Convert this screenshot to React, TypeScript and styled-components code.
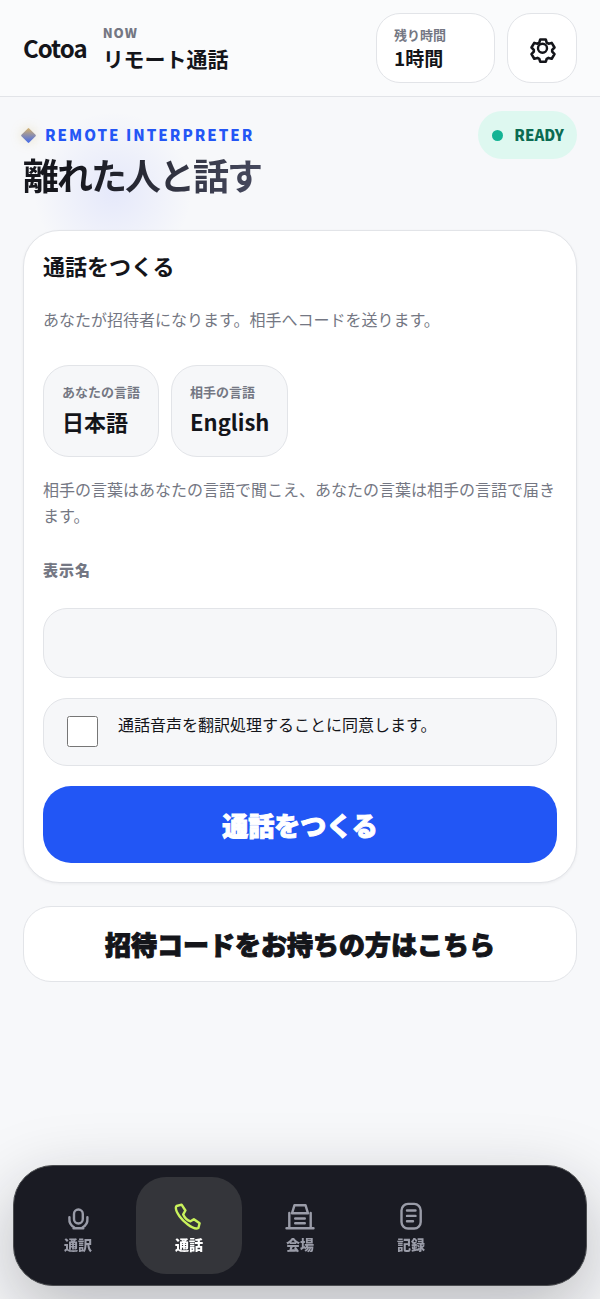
import React from "react";
import styled, { createGlobalStyle, css } from "styled-components";

const GlobalStyle = createGlobalStyle`
  *, *::before, *::after { box-sizing: border-box; }
  body {
    margin: 0;
    min-height: 100vh;
    background: #f7f8fa;
    color: #14151a;
    font-family: "Noto Sans CJK JP", "Noto Sans", sans-serif;
    font-size: 16px;
    line-height: 26px;
  }
  button, input { font: inherit; color: inherit; }
  h1, h2, p { margin: 0; }
`;

const buttonText = css`
  font-size: 26px;
  font-weight: 900;
  -webkit-text-stroke: 1px currentColor;
`;

const Page = styled.div`
  min-height: 100vh;
  padding-bottom: 160px;
`;

const Header = styled.header`
  display: flex;
  align-items: center;
  gap: 12px;
  padding: 13px 23px;
  background: #fafbfc;
  border-bottom: 1px solid #e2e4e8;
`;

const Brand = styled.a`
  margin-right: 4px;
  color: inherit;
  font-size: 24px;
  font-weight: 700;
  line-height: 32px;
  letter-spacing: -1px;
  text-decoration: none;
`;

const Context = styled.div`
  display: flex;
  flex: 1;
  flex-direction: column;
  min-width: 0;
`;

const ContextLabel = styled.span`
  color: #747783;
  font-size: 13px;
  font-weight: 900;
  line-height: 20px;
  letter-spacing: 1px;
`;

const ContextTitle = styled.strong`
  font-size: 21px;
  font-weight: 700;
  line-height: 30px;
`;

const TimeCard = styled.div`
  display: flex;
  flex-direction: column;
  justify-content: center;
  width: 119px;
  height: 70px;
  padding: 0 17px;
  background: #fff;
  border: 1px solid #e2e4e8;
  border-radius: 24px;
`;

const SmallLabel = styled.span`
  color: #747783;
  font-size: 13px;
  font-weight: 700;
  line-height: 20px;
`;

const TimeValue = styled.strong`
  font-size: 19px;
  font-weight: 700;
  line-height: 26px;
`;

const SettingsButton = styled.button`
  display: grid;
  place-items: center;
  width: 70px;
  height: 70px;
  padding: 0;
  background: #fff;
  border: 1px solid #e2e4e8;
  border-radius: 24px;
`;

const Main = styled.main`
  padding: 14px 23px 0;
`;

const Hero = styled.section`
  position: relative;
  margin-bottom: 33px;

  &::before {
    content: "";
    position: absolute;
    left: 10px;
    top: 0;
    width: 160px;
    height: 160px;
    background: radial-gradient(circle, rgba(82, 104, 255, 0.11), rgba(82, 104, 255, 0) 70%);
    pointer-events: none;
  }
`;

const HeroTop = styled.div`
  position: relative;
  display: flex;
  align-items: center;
  justify-content: space-between;
`;

const Eyebrow = styled.p`
  display: flex;
  align-items: center;
  gap: 11px;
  color: #2456f5;
  font-size: 15px;
  font-weight: 900;
  letter-spacing: 2px;

  &::before {
    content: "";
    width: 11px;
    height: 11px;
    background: linear-gradient(135deg, #d8b36a, #3f68ee);
    border-radius: 1px;
    box-shadow: 0 0 12px rgba(216, 190, 110, 0.4);
    transform: rotate(45deg);
  }
`;

const Status = styled.span`
  display: flex;
  align-items: center;
  gap: 11px;
  height: 48px;
  padding: 0 13px 0 14px;
  background: #def8f0;
  border-radius: 24px;
  color: #0b6b52;
  font-size: 15px;
  font-weight: 900;

  &::before {
    content: "";
    width: 11px;
    height: 11px;
    background: #14b394;
    border-radius: 50%;
  }
`;

const Title = styled.h1`
  position: relative;
  width: fit-content;
  margin-top: -7px;
  background: linear-gradient(100deg, #16171d 20%, #484b60);
  background-clip: text;
  color: transparent;
  font-size: 36px;
  font-weight: 700;
  line-height: 45px;
  letter-spacing: -2px;
`;

const Card = styled.section`
  position: relative;
  display: flex;
  flex-direction: column;
  padding: 19px;
  background: #fff;
  border: 1px solid #e2e4e8;
  border-radius: 36px;
  box-shadow: 0 1px 3px rgba(20, 22, 30, 0.06);
`;

const CardTitle = styled.h2`
  font-size: 22px;
  font-weight: 700;
  line-height: 30px;
`;

const Note = styled.p`
  color: #747783;
`;

const Intro = styled(Note)`
  margin: 26px 0 33px;
`;

const Languages = styled.div`
  display: flex;
  gap: 12px;
  margin-bottom: 19px;
`;

const Language = styled.button`
  display: flex;
  flex-direction: column;
  align-items: flex-start;
  justify-content: center;
  height: 92px;
  padding: 0 18px;
  background: #f6f7f9;
  border: 1px solid #e2e4e8;
  border-radius: 26px;
`;

const LanguageName = styled.strong`
  font-size: 22px;
  font-weight: 700;
  line-height: 38px;
`;

const FieldLabel = styled.label`
  margin: 29px 0 25px;
  color: #747783;
  font-size: 15px;
  font-weight: 900;
  letter-spacing: 1px;
`;

const TextField = styled.input`
  width: 100%;
  height: 70px;
  padding: 0 20px;
  background: #f6f7f9;
  border: 1px solid #e2e4e8;
  border-radius: 24px;
`;

const Consent = styled.label`
  display: flex;
  align-items: flex-start;
  gap: 20px;
  height: 68px;
  margin: 20px 0;
  padding: 12px 23px;
  background: #f6f7f9;
  border: 1px solid #e2e4e8;
  border-radius: 24px;
`;

const Tick = styled.input`
  width: 31px;
  height: 31px;
  margin: 5px 0 0;
`;

const PrimaryButton = styled.button`
  height: 77px;
  padding: 0;
  background: #2256f5;
  border: 0;
  border-radius: 28px;
  color: #fff;
  ${buttonText}
`;

const SecondaryButton = styled.button`
  width: 100%;
  height: 76px;
  margin-top: 23px;
  padding: 0;
  background: #fff;
  border: 1px solid #e2e4e8;
  border-radius: 28px;
  ${buttonText}
`;

const Dock = styled.nav`
  position: fixed;
  right: 13px;
  bottom: 13px;
  left: 13px;
  display: grid;
  grid-template-columns: repeat(5, 1fr);
  gap: 5px;
  padding: 11px;
  background: #1a1b23;
  border: 1px solid #4b4d50;
  border-radius: 40px;
  box-shadow: 0 24px 72px rgba(20, 22, 30, 0.28);
`;

const DockItem = styled.a<{ $active?: boolean }>`
  display: flex;
  flex-direction: column;
  align-items: center;
  justify-content: center;
  gap: 1px;
  height: 97px;
  padding-top: 5px;
  background: ${(p) => (p.$active ? "#34353a" : "transparent")};
  border-radius: 30px;
  color: ${(p) => (p.$active ? "#fff" : "#9a9ca8")};
  font-size: 14px;
  font-weight: 900;
  line-height: 24px;
  text-decoration: none;

  svg { color: ${(p) => (p.$active ? "#c9f25c" : "inherit")}; }
`;

const Icon = ({ children }: { children: React.ReactNode }) => (
  <svg
    width={30}
    height={30}
    viewBox="0 0 30 30"
    fill="none"
    stroke="currentColor"
    strokeWidth={2.4}
    strokeLinecap="round"
    strokeLinejoin="round"
    aria-hidden="true"
  >
    {children}
  </svg>
);

const GearIcon = () => (
  <Icon>
    <g transform="translate(1 2.5)">
      <path
        strokeWidth={2.6}
        d="M12.2 4h5.600l.9 3.200 1.800 1 3.200-.8 2.800 4.600-2.300 2.400v1.800l2.300 2.400-2.800 4.600-3.200-.8-1.800 1-.9 2.800h-5.600l-.9-2.800-1.800-1-3.200.8-2.800-4.600L5.800 16.200v-1.800L3.500 12l2.800-4.600 3.200.8 1.800-1z"
      />
      <circle cx="14.500" cy="12.700" r="4.500" strokeWidth={2.400} />
    </g>
  </Icon>
);

const MicIcon = () => (
  <Icon>
    <rect x="11" y="8.500" width="8.800" height="14" rx="4.400" />
    <path d="M6.400 16.200v1.500a9 9 0 0 0 5 8.800M24.400 16.200v1.500a9 9 0 0 1-5 8.800M10.500 27.200h9.800" />
  </Icon>
);

const PhoneIcon = () => (
  <Icon>
    <path d="M2.600 5 7.600 3.600 11.400 9.500 9.200 13.400C10.800 17 13.300 19.300 16.500 20.300L19.900 18.200 25.600 22.200 24.400 27C22 28.200 17.500 26.300 13.500 23.200 7.500 18.800 2 11.500 1.900 7.300 1.800 6.300 2 5.500 2.600 5Z" />
  </Icon>
);

const VenueIcon = () => (
  <Icon>
    <path d="M1.500 27.200h27M4.300 12v15M25.700 12v15M7 12.300 9.500 4.200h11L23 12.300zM10.200 17.500h9.600M10.200 22.300h9.600" />
  </Icon>
);

const RecordIcon = () => (
  <Icon>
    <rect x="5.500" y="2.900" width="19.200" height="24.600" rx="6.500" />
    <path d="M11 9.500h8.500M11 14.900h8.500M11 20.300h6" />
  </Icon>
);

export default function App() {
  return (
    <>
      <GlobalStyle />
      <Page>
        <Header>
          <Brand href="#">Cotoa</Brand>
          <Context>
            <ContextLabel>NOW</ContextLabel>
            <ContextTitle>リモート通話</ContextTitle>
          </Context>
          <TimeCard>
            <SmallLabel>残り時間</SmallLabel>
            <TimeValue>1時間</TimeValue>
          </TimeCard>
          <SettingsButton type="button" aria-label="設定">
            <GearIcon />
          </SettingsButton>
        </Header>
        <Main>
          <Hero>
            <HeroTop>
              <Eyebrow>REMOTE INTERPRETER</Eyebrow>
              <Status>READY</Status>
            </HeroTop>
            <Title>離れた人と話す</Title>
          </Hero>
          <Card>
            <CardTitle>通話をつくる</CardTitle>
            <Intro>あなたが招待者になります。相手へコードを送ります。</Intro>
            <Languages>
              <Language type="button">
                <SmallLabel>あなたの言語</SmallLabel>
                <LanguageName>日本語</LanguageName>
              </Language>
              <Language type="button">
                <SmallLabel>相手の言語</SmallLabel>
                <LanguageName>English</LanguageName>
              </Language>
            </Languages>
            <Note>相手の言葉はあなたの言語で聞こえ、あなたの言葉は相手の言語で届きます。</Note>
            <FieldLabel htmlFor="display-name">表示名</FieldLabel>
            <TextField id="display-name" type="text" />
            <Consent>
              <Tick type="checkbox" />
              <span>通話音声を翻訳処理することに同意します。</span>
            </Consent>
            <PrimaryButton type="button">通話をつくる</PrimaryButton>
          </Card>
          <SecondaryButton type="button">招待コードをお持ちの方はこちら</SecondaryButton>
        </Main>
        <Dock>
          <DockItem href="#interpret"><MicIcon />通訳</DockItem>
          <DockItem href="#call" $active aria-current="page"><PhoneIcon />通話</DockItem>
          <DockItem href="#venue"><VenueIcon />会場</DockItem>
          <DockItem href="#records"><RecordIcon />記録</DockItem>
        </Dock>
      </Page>
    </>
  );
}
